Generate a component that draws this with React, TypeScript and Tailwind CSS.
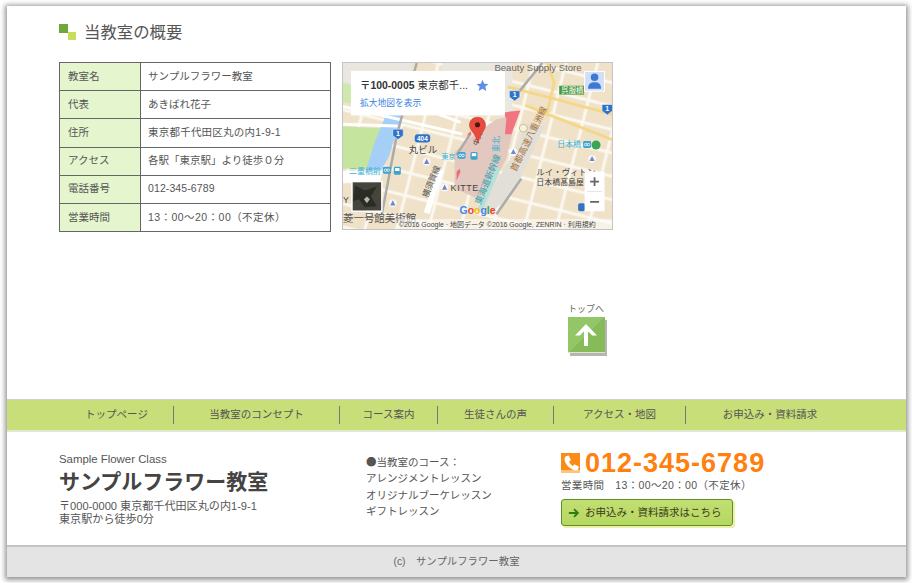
const jp = { fontFamily: '"Liberation Sans", "Noto Sans CJK JP", sans-serif' };

const rows: [string, string, string][] = [
  ["教室名", "サンプルフラワー教室", ""],
  ["代表", "あきばれ花子", ""],
  ["住所", "東京都千代田区丸の内1-9-1", "tracking-[0.22px]"],
  ["アクセス", "各駅「東京駅」より徒歩０分", ""],
  ["電話番号", "012-345-6789", "tracking-[0.1px]"],
  ["営業時間", "13：00〜20：00（不定休）", "tracking-[0.45px]"],
];

const nav: [string, string][] = [
  ["トップページ", "w-[114px]"],
  ["当教室のコンセプト", "w-[166px]"],
  ["コース案内", "w-[98px]"],
  ["生徒さんの声", "w-[116px]"],
  ["アクセス・地図", "w-[132px]"],
  ["お申込み・資料請求", "w-[168px]"],
];

function Metro({ x, y }: { x: number; y: number }) {
  return (
    <g transform={`translate(${x} ${y})`}>
      <rect width="8" height="7" rx="1.500" fill="#3ba3d0" />
      <circle cx="2.600" cy="3.500" r="1.300" fill="none" stroke="#fff" strokeWidth=".8" />
      <circle cx="5.400" cy="3.500" r="1.300" fill="none" stroke="#fff" strokeWidth=".8" />
    </g>
  );
}
function Train({ x, y }: { x: number; y: number }) {
  return (
    <g transform={`translate(${x} ${y})`}>
      <rect width="7" height="8" rx="1.500" fill="#3ba3d0" />
      <rect x="1.300" y="1.300" width="4.400" height="3" fill="#fff" />
    </g>
  );
}
function Poi({ x, y }: { x: number; y: number }) {
  return (
    <g transform={`translate(${x} ${y})`}>
      <circle r="4" fill="#fff" opacity=".7" />
      <path d="M0-3L2.600 2.200H-2.600z" fill="#6f86d8" />
    </g>
  );
}
function Shield({ x, y, n }: { x: number; y: number; n: string }) {
  return (
    <g transform={`translate(${x} ${y})`}>
      <path d="M0 0h10.500v6.500L5.250 10.500 0 6.500z" fill="#2f74c8" stroke="#fff" strokeWidth=".5" />
      <text x="5.250" y="6.800" fontSize="7" fontWeight="700" fill="#fff" textAnchor="middle">{n}</text>
    </g>
  );
}

function MapArt() {
  return (
    <svg viewBox="0 0 270 168" width="269" height="166" preserveAspectRatio="none" className="block" style={jp}>
      <defs>
        <pattern id="blocks" width="31" height="23" patternUnits="userSpaceOnUse" patternTransform="rotate(14)">
          <rect width="31" height="23" fill="#fbf8f1" />
          <rect x="1.500" y="1.500" width="28" height="20" fill="#f0e2c8" />
        </pattern>
      </defs>
      <rect width="270" height="168" fill="url(#blocks)" />
      {/* pale zones */}
      <path d="M0 0h70L60 50 0 40z" fill="#e9e7e0" />
      <path d="M100 0h70v50h-70z" fill="#e9e7e0" />
      <path d="M166 100l20-40 16 4-30 66-24 22-8-8z" fill="#e2dfd9" />
      {/* park & river */}
      <path d="M0 64l38 2-10 41H0z" fill="#c5e59f" />
      <path d="M0 20l30 6 8 18-38-4z" fill="#cfe9ad" />
      <path d="M44 50l15 3-13 42-8 14-15-1 9-28z" fill="#a6cff7" />
      <path d="M0 109h40l-3 12H0z" fill="#ffffff" />
      <path d="M0 122h34l-2 16H0z" fill="#f0e2c8" />
      {/* station */}
      <path d="M112 90l19-17 23-16 20-4-10 44-23 43-29-13z" fill="#e3c8bf" />
      <path d="M161 50l17-2-9 24h-6.500l1.500-15z" fill="#f1757f" />
      <path d="M125 72l3-3 1 3-4 6zM114 110l3-3 1 3-4 9z" fill="#ee6f7a" />
      {/* roads */}
      <g stroke="#ffffff" strokeWidth="3" fill="none">
        <path d="M0 44L120 72" />
        <path d="M0 62L60 64" />
        <path d="M96 52L118 60" />
      </g>
      <g stroke="#f4d88a" strokeWidth="3" fill="none">
        <path d="M183 43L271 78" />
        <path d="M165 24L215 37L270 52" />
        <path d="M205 0L212 20L204 54" />
      </g>
      <g stroke="#ababab" strokeWidth="2.500" fill="none">
        <path d="M74 0L61 47L54 73L39 153" />
        <path d="M114 93L127 73" />
        <path d="M179 117L154 153" />
        <path d="M200 0L176 30" />
      </g>
      <path d="M156 106L137 150" stroke="#b7e0d8" strokeWidth="5" fill="none" />
      <path d="M98 108L84 152" stroke="#ffffff" strokeWidth="6" fill="none" />
      {/* rotated labels */}
      <text transform="translate(205 46) rotate(-64)" fill="#a7733b" fontSize="9" textAnchor="end">首都高速八重洲線</text>
      <text transform="translate(138 144) rotate(-68)" fill="#2aa5b5" fontSize="9">東海道新幹線</text>
      <text transform="translate(85 137) rotate(-68)" fill="#555" fontSize="8.500">横須賀線</text>
      <text transform="translate(157 90) rotate(-90)" fill="#3bb0d6" fontSize="8">東北</text>
      <text transform="translate(135 84) rotate(-70)" fill="#444" fontSize="7">中央</text>
      {/* labels */}
      <text x="152" y="8" fontSize="9.600" fill="#666">Beauty Supply Store</text>
      <text x="66" y="91" fontSize="9.500" fill="#444">丸ビル</text>
      <text x="108" y="130" fontSize="9" letterSpacing=".6" fill="#444">KITTE</text>
      <text x="194" y="113" fontSize="8.500" fill="#444">ルイ・ヴィトン</text>
      <text x="194" y="123" fontSize="8" fill="#444">日本橋髙島屋</text>
      <text x="0" y="142" fontSize="9" fill="#444">Y</text>
      <text x="0" y="161" fontSize="10.500" fill="#555">菱一号館美術館</text>
      <text x="99" y="97" fontSize="7" fill="#37b3d8">東京</text>
      <text x="6" y="112" fontSize="8" fill="#37b3d8">二重橋前</text>
      <text x="215" y="85" fontSize="8" fill="#37b3d8">日本橋</text>
      <Metro x={115} y={90} />
      <Train x={128} y={90} />
      <Metro x={40} y={105} />
      <Train x={51} y={105} />
      <Metro x={241} y={79} />
      <circle cx="254" cy="83" r="4.500" fill="#3aa655" />
      <Poi x={84} y={100} />
      <Poi x={102} y={126} />
      <Poi x={50} y={142} />
      <Poi x={171} y={90} />
      <Poi x={250} y={97} />
      <circle cx="181" cy="66" r="4" fill="#f7f2dc" stroke="#a89a66" strokeWidth=".6" />
      <Shield x={50} y={67} n="1" />
      <Shield x={167} y={28} n="1" />
      <Shield x={260} y={42} n="1" />
      <rect x="72" y="72" width="15.500" height="8.500" rx="3" fill="#2f74c8" />
      <text x="79.700" y="78.700" fontSize="6.500" fontWeight="700" fill="#fff" textAnchor="middle">404</text>
      <rect x="236" y="142" width="7" height="8" rx="2" fill="#2f74c8" />
      <rect x="217" y="23" width="25" height="9" fill="#4c9a3f" />
      <text x="219" y="30.500" fontSize="7.500" fill="#fff">呉服橋</text>
      {/* info card */}
      <rect x="8" y="8" width="154.500" height="45" fill="#fff" />
      <text x="17" y="26" fontSize="10.500" fill="#333"><tspan fontWeight="700">〒100-0005</tspan> 東京都千...</text>
      <text x="17" y="43.500" fontSize="8.800" fill="#3a84df">拡大地図を表示</text>
      <path d="M140 17l1.700 3.900 4.300.4-3.200 2.800 1 4.200-3.800-2.300-3.800 2.300 1-4.200-3.200-2.800 4.300-.4z" fill="#5b8fe8" />
      {/* person */}
      <rect x="242.500" y="8.500" width="20" height="20" fill="#cfe0f8" stroke="#fff" />
      <circle cx="252.500" cy="14.500" r="3.800" fill="#3f78d2" />
      <path d="M246 26c0-5 2.800-6.500 6.500-6.500s6.500 1.500 6.500 6.500z" fill="#3f78d2" />
      {/* pin */}
      <path d="M135 55c5 0 8 3.600 8 8 0 5.500-5.500 8-7.500 18.500C133.500 71 127 68.500 127 63c0-4.400 3-8 8-8z" fill="#ea4a3d" stroke="#b03028" strokeWidth=".5" />
      <circle cx="135" cy="62.500" r="2.600" fill="#4a1712" />
      {/* zoom */}
      <rect x="242.500" y="110" width="20" height="40" fill="#fff" />
      <path d="M245 130h15" stroke="#e5e5e5" />
      <path d="M248 120h9M252.500 115.500v9M248 140.500h9" stroke="#666" strokeWidth="1.800" />
      {/* satellite */}
      <rect x="9" y="120" width="30" height="30" fill="#45453c" stroke="#fff" strokeWidth="1.500" />
      <path d="M12 124l10 5 12-4-6 10 6 10-12 1-6-8-6 2z" fill="#2c2c27" />
      <path d="M24 135l3 3-3 4-3-4z" fill="#b8b8ae" />
      {/* google */}
      <text x="117" y="153" fontSize="10.500" fontWeight="700">
        <tspan fill="#4285f4">G</tspan><tspan fill="#ea4335">o</tspan><tspan fill="#fbbc05">o</tspan><tspan fill="#4285f4">g</tspan><tspan fill="#34a853">l</tspan><tspan fill="#ea4335">e</tspan>
      </text>
      <rect x="55" y="158" width="215" height="10" fill="#fff" opacity="0.55" />
      <text x="56" y="166" fontSize="7" fill="#444">©2016 Google · 地図データ ©2016 Google, ZENRIN · 利用規約</text>
    </svg>
  );
}

export default function App() {
  return (
    <div className="w-[912px] h-[583px] bg-white pt-[6px] pl-[7px] overflow-hidden" style={jp}>
      <div className="w-[899px] h-[571px] bg-white shadow-[0_1px_5px_2px_rgba(0,0,0,0.42)] flex flex-col text-[#555]">
        {/* main */}
        <div className="h-[393px] pl-[52px] flex flex-col shrink-0">
          <div className="flex items-center h-[22px] mt-[15px]">
            <div className="relative w-[17px] h-[16px] mr-[8px]">
              <span className="absolute left-0 top-0 w-[9px] h-[9px] bg-[#6fa83a]" />
              <span className="absolute left-[9px] top-[8px] w-[8px] h-[8px] bg-[#c8dc5e]" />
            </div>
            <h2 className="text-[16.4px] leading-[22px] text-[#555]">当教室の概要</h2>
          </div>
          <div className="flex mt-[19px] gap-[11px]">
            <div className="w-[272px] h-[170px] border border-[#666] flex flex-col bg-white shrink-0">
              {rows.map(([k, v, tr], i) => (
                <div key={k} className={`flex flex-1 text-[10.5px] ${i > 0 ? "border-t border-[#666]" : ""}`}>
                  <div className="w-[81px] bg-[#e5f6cf] border-r border-[#666] pl-[8px] flex items-center shrink-0">{k}</div>
                  <div className={`pl-[7px] flex items-center ${tr}`}>{v}</div>
                </div>
              ))}
            </div>
            <div className="w-[271px] h-[168px] border border-[#c4c4c4] shrink-0">
              <MapArt />
            </div>
          </div>
          <div className="ml-[505px] mt-[71px] w-[44px] flex flex-col items-center">
            <span className="text-[9px] leading-[12px] text-[#666]">トップへ</span>
            <div className="w-[37px] h-[36px] mt-[2px] bg-[linear-gradient(135deg,#93c666_50%,#87bb5a_50%)] shadow-[2px_3px_0_#b5b5b5] border-b border-[#dbeac4] flex items-center justify-center">
              <svg viewBox="0 0 24 24" width="24" height="24">
                <path d="M12 1L23 12.500h-4.800L14 8.300V23h-4V8.300L5.800 12.500H1z" fill="#fff" />
              </svg>
            </div>
          </div>
        </div>
        {/* nav */}
        <nav className="h-[33px] shrink-0 bg-[#c8de78] border-t border-b-2 border-t-[#d0d0d0] border-b-[#e2e8d0] pl-[53px] flex items-center">
          <div className="flex items-center text-[10.5px] text-[#555]">
            {nav.map(([n, w], i) => (
              <div key={n} className={`${w} h-[18px] flex items-center justify-center ${i < nav.length - 1 ? "border-r border-[#777]" : ""}`}>{n}</div>
            ))}
          </div>
        </nav>
        {/* footer body */}
        <div className="flex-1 flex pl-[52px]">
          <div className="w-[307px] pt-[20px]">
            <p className="text-[11.4px] leading-[14px]">Sample Flower Class</p>
            <p className="text-[21px] leading-[30px] font-bold text-[#444] mt-[1px]">サンプルフラワー教室</p>
            <p className="text-[11.1px] leading-[13px] mt-[3px]">〒000-0000 東京都千代田区丸の内1-9-1<br />東京駅から徒歩0分</p>
          </div>
          <div className="w-[195px] pt-[22px] text-[10.5px] leading-[16.300px]">
            <p><span className="font-['Noto_Sans_CJK_JP']">●</span>当教室のコース：</p>
            <p>アレンジメントレッスン</p>
            <p>オリジナルブーケレッスン</p>
            <p>ギフトレッスン</p>
          </div>
          <div className="pt-[19px]">
            <div className="flex items-center h-[24px]">
              <span className="w-[19px] h-[20px] bg-[linear-gradient(180deg,#fb8a17_85%,#fbc67a_85%)] flex items-center justify-center mr-[5px]">
                <svg viewBox="0 0 24 24" width="18" height="18"><path d="M5 3l4-1 3 6-2.500 2c1 3 3 5 5 6l2-2.500 6 3-1 4c-1 1-3 1.500-5 1C10 19.500 4.500 14 3.500 8 3 6 4 4 5 3z" fill="#fff" /></svg>
              </span>
              <span className="text-[27px] leading-[24px] tracking-[1px] font-bold text-[#ff7f0f]">012-345-6789</span>
            </div>
            <p className="text-[10.5px] leading-[14px] mt-[3px] tracking-[0.36px] whitespace-pre">営業時間　13：00〜20：00（不定休）</p>
            <div className="mt-[7px] w-[172px] h-[27px] rounded-[3px] bg-[linear-gradient(180deg,#c2df72,#b6d762)] border border-[#5b8f2a] shadow-[2px_2px_0_#eef0a8] flex items-center pl-[6px] text-[10.5px] text-[#3a3a1a]">
              <svg viewBox="0 0 14 14" width="12" height="12" className="mr-[5px]"><path d="M1 7h10M7 2.500L11.500 7 7 11.500" stroke="#2e7d10" strokeWidth="2.200" fill="none" /></svg>
              お申込み・資料請求はこちら
            </div>
          </div>
        </div>
        {/* copyright */}
        <div className="h-[32px] shrink-0 bg-[#e4e4e4] border-t-2 border-[#c4c4c4] flex items-center justify-center text-[10.4px] text-[#666]">
          (c)　サンプルフラワー教室
        </div>
      </div>
    </div>
  );
}
